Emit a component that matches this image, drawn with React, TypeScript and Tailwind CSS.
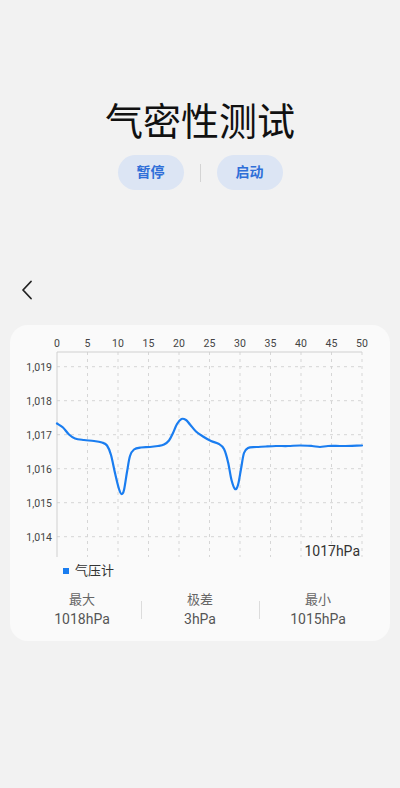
import React from 'react';

const font = { fontFamily: 'Roboto, "Noto Sans CJK SC", sans-serif' };

// curve points in page coordinates; shifted into the card below
const rawPoints: [number, number][] = [
  [57, 423.5], [63, 427.5], [69, 434.5], [75, 438.5], [84, 440], [94, 441], [102, 442.5],
  [107, 445.5], [111, 455], [115, 473], [119, 489], [121.5, 494], [124, 490], [127, 472],
  [130, 456], [134, 449.5], [141, 447.5], [150, 447], [158, 446], [164, 444.5], [169, 440.5],
  [173, 433], [177, 424], [181.5, 419], [186, 420], [190, 424.5], [196, 431.5], [203, 436.5],
  [211, 441], [219, 444], [224, 449], [228, 462], [231.5, 480], [235, 489], [238, 485],
  [241, 469], [244, 453], [248, 448], [256, 447], [266, 446.5], [276, 446], [288, 446],
  [300, 445.5], [312, 446], [320, 447], [328, 446], [340, 446], [352, 445.8], [362, 445.5],
];

function smoothPath(pts: [number, number][]) {
  const p = pts.map(([x, y]) => [x - 10, y - 325]);
  let d = `M${p[0][0]},${p[0][1]}`;
  for (let i = 0; i < p.length - 1; i++) {
    const p0 = p[i - 1] || p[i];
    const p1 = p[i];
    const p2 = p[i + 1];
    const p3 = p[i + 2] || p2;
    const c1x = p1[0] + (p2[0] - p0[0]) / 6;
    const c1y = p1[1] + (p2[1] - p0[1]) / 6;
    const c2x = p2[0] - (p3[0] - p1[0]) / 6;
    const c2y = p2[1] - (p3[1] - p1[1]) / 6;
    d += ` C${c1x.toFixed(1)},${c1y.toFixed(1)} ${c2x.toFixed(1)},${c2y.toFixed(1)} ${p2[0]},${p2[1]}`;
  }
  return d;
}

const xTicks = [0, 5, 10, 15, 20, 25, 30, 35, 40, 45, 50];
const yTicks = ['1,019', '1,018', '1,017', '1,016', '1,015', '1,014'];

function Chart() {
  const left = 47;
  const right = 352;
  const top = 27;
  const bottom = 232;
  return (
    <svg width="380" height="236" viewBox="0 0 380 236" className="block">
      {xTicks.map((t, i) => {
        const x = left + i * 30.5;
        return (
          <g key={t}>
            <text x={x} y={21.5} textAnchor="middle" fontSize="10.5" fill="#444" style={font}>
              {t}
            </text>
            {i > 0 && (
              <line x1={x} y1={top} x2={x} y2={bottom} stroke="#d6d6d6" strokeWidth="1" strokeDasharray="3 4" />
            )}
          </g>
        );
      })}
      {yTicks.map((t, i) => {
        const y = 41.7 + i * 34;
        return (
          <g key={t}>
            <text x={42} y={y + 4} textAnchor="end" fontSize="10.5" fill="#444" style={font}>
              {t}
            </text>
            <line x1={left} y1={y} x2={right} y2={y} stroke="#d6d6d6" strokeWidth="1" strokeDasharray="3 4" />
          </g>
        );
      })}
      <line x1={left} y1={top} x2={right} y2={top} stroke="#d0d0d0" strokeWidth="1" />
      <line x1={left} y1={top} x2={left} y2={bottom} stroke="#d0d0d0" strokeWidth="1" />
      <path d={smoothPath(rawPoints)} fill="none" stroke="#1a7df0" strokeWidth="2.2" strokeLinejoin="round" strokeLinecap="round" />
      <text x={350} y={231} textAnchor="end" fontSize="14" fill="#333" style={font}>
        1017hPa
      </text>
    </svg>
  );
}

function Stat({ label, value }: { label: string; value: string }) {
  return (
    <div className="w-[117px] flex flex-col items-center">
      <span className="text-[13px] leading-[18px] text-[#666]">{label}</span>
      <span className="text-[14px] leading-[20px] text-[#555]">{value}</span>
    </div>
  );
}

export default function App() {
  return (
    <div className="w-[400px] h-[788px] bg-[#f2f2f2] overflow-hidden" style={font}>
      <div className="pt-[100px] flex flex-col items-center">
        <h1 className="text-[38px] leading-[44px] text-[#111] font-normal">气密性测试</h1>
        <div className="mt-[11px] flex items-center">
          <button className="w-[66px] h-[35px] rounded-full bg-[#dce5f4] text-[#2f6fd8] text-[14px] font-bold">
            暂停
          </button>
          <div className="mx-[16px] w-px h-[18px] bg-[#d4d4d4]" />
          <button className="w-[66px] h-[35px] rounded-full bg-[#dce5f4] text-[#2f6fd8] text-[14px] font-bold">
            启动
          </button>
        </div>
      </div>
      <div className="mt-[90px] pl-[21px] h-[20px]">
        <svg width="12" height="20" viewBox="0 0 12 20">
          <path d="M10 1.5 L2 10 L10 18.5" fill="none" stroke="#222" strokeWidth="1.8" strokeLinecap="round" strokeLinejoin="round" />
        </svg>
      </div>
      <div className="mt-[25px] mx-[10px] h-[316px] rounded-[18px] bg-[#fafafa] overflow-hidden">
        <Chart />
        <div className="flex items-center pl-[53px] h-[17px] mt-[1px]">
          <span className="w-[6px] h-[6px] bg-[#1a7df0]" />
          <span className="ml-[6px] text-[13px] leading-[17px] text-[#333]">气压计</span>
        </div>
        <div className="mt-[12px] flex items-center justify-center">
          <Stat label="最大" value="1018hPa" />
          <div className="w-px h-[18px] bg-[#dcdcdc]" />
          <Stat label="极差" value="3hPa" />
          <div className="w-px h-[18px] bg-[#dcdcdc]" />
          <Stat label="最小" value="1015hPa" />
        </div>
      </div>
    </div>
  );
}
